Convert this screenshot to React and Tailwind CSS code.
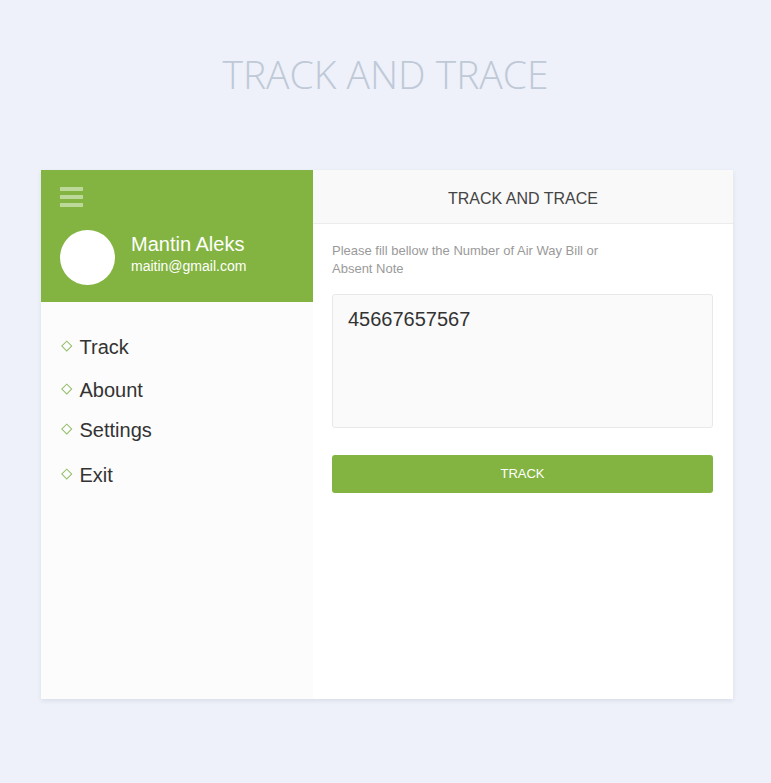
export default function App() {
  const items = ["Track", "Abount", "Settings", "Exit"];
  const gaps = ["mt-0", "mt-[19px]", "mt-[16px]", "mt-[21px]"];
  return (
    <div className="min-h-[783px] w-full bg-[#eef1f9] font-['Liberation_Sans',Arial,sans-serif]">
      <h1 className="pt-[51px] text-center text-[39px] leading-[46px] font-light text-[#bfc9d7] font-['Open_Sans',sans-serif]">
        TRACK AND TRACE
      </h1>
      <div className="mx-[41px] mt-[73px] flex h-[529px] w-[692px] shadow-[0_2px_4px_rgba(180,190,210,0.35)]">
        <aside className="flex w-[272px] flex-col bg-[#fcfcfc]">
          <div className="h-[132px] bg-[#83b441] px-[19px] pt-[17px]">
            <div className="flex w-[23px] flex-col gap-[4px]">
              <span className="h-[4px] bg-[#bcd99a]" />
              <span className="h-[4px] bg-[#bcd99a]" />
              <span className="h-[4px] bg-[#bcd99a]" />
            </div>
            <div className="mt-[23px] flex items-center">
              <div className="h-[55px] w-[55px] rounded-full bg-white" />
              <div className="ml-[16px] -mt-[9px] text-white">
                <div className="text-[20px] leading-[24px]">Mantin Aleks</div>
                <div className="mt-[2px] text-[14px] leading-[16px]">maitin@gmail.com</div>
              </div>
            </div>
          </div>
          <ul className="pt-[33px] pl-[20px]">
            {items.map((t, i) => (
              <li key={t} className={`flex items-center ${gaps[i]}`}>
                <span className="ml-[2px] mr-[10px] h-[7.5px] w-[7.5px] -translate-y-[1px] rotate-45 border-[1.5px] border-[#93bc66]" />
                <span className="-ml-[1px] text-[20px] leading-[24px] text-[#333333]">{t}</span>
              </li>
            ))}
          </ul>
        </aside>
        <main className="flex flex-1 flex-col bg-white">
          <div className="flex h-[54px] items-center justify-center border-b border-[#ececec] bg-[#f9f9f9] pt-[4px] text-[16px] text-[#444444]">
            TRACK AND TRACE
          </div>
          <div className="px-[19px] pt-[18px]">
            <p className="w-[285px] text-[13px] leading-[18px] text-[#9a9a9a]">
              Please fill bellow the Number of Air Way Bill or Absent Note
            </p>
            <div className="mt-[16px] h-[134px] w-[381px] rounded-[3px] border border-[#e8e8e8] bg-[#fafafa] px-[15px] pt-[12px] text-[20px] leading-[24px] text-[#333333]">
              45667657567
            </div>
            <button className="mt-[27px] flex h-[38px] w-[381px] items-center justify-center rounded-[3px] bg-[#83b441] text-[13px] text-white">
              TRACK
            </button>
          </div>
        </main>
      </div>
    </div>
  );
}
